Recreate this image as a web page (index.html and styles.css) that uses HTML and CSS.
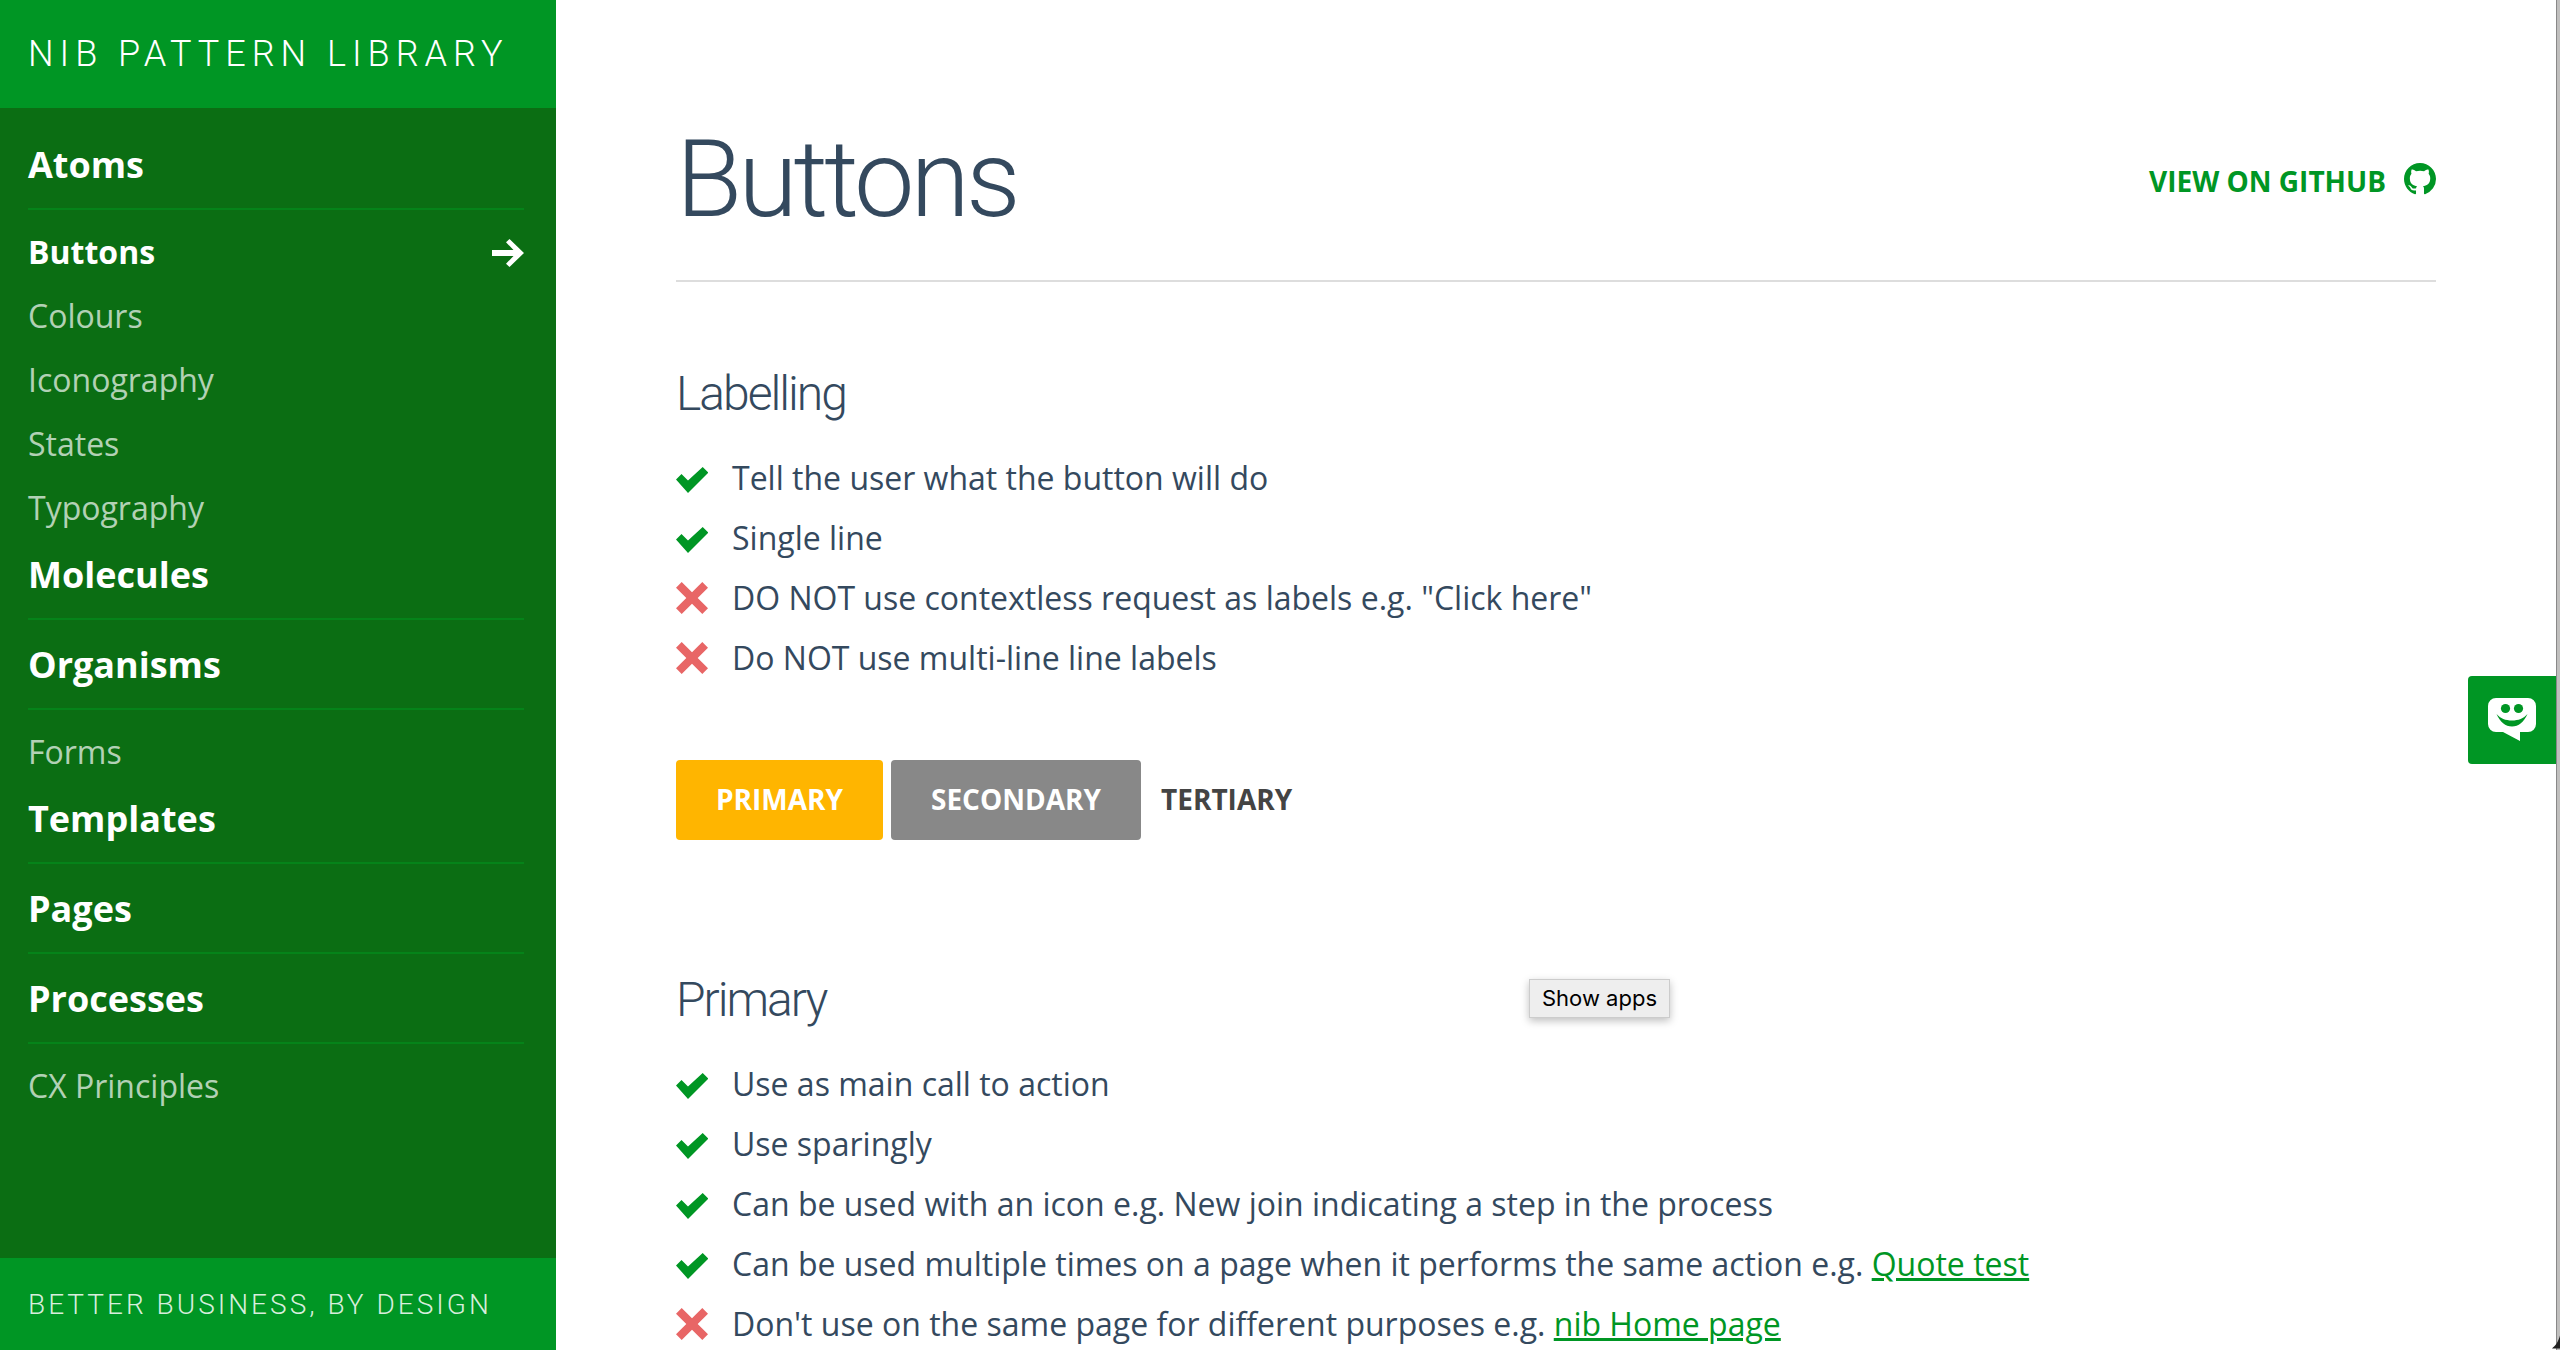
FILE: index.html
```html
<!DOCTYPE html>
<html lang="en">
<head>
<meta charset="utf-8">
<title>Buttons - nib Pattern Library</title>
<link rel="stylesheet" href="styles.css">
</head>
<body>
<svg class="sprite" aria-hidden="true">
  <symbol id="tick" viewBox="0 0 32 32"><path d="M0 17.500 5.500 12l6.500 6.500L26.700 5 32.300 10.600 12 31z"/></symbol>
  <symbol id="cross" viewBox="0 0 32 32"><path d="M5.700 0 16 10.300 26.300 0 32 5.700 21.700 16 32 26.300 26.300 32 16 21.700 5.700 32 0 26.300 10.300 16 0 5.700z"/></symbol>
</svg>
<div class="layout">
  <aside class="sidebar">
    <a class="brand" href="#">NIB PATTERN LIBRARY</a>
    <nav class="nav">
      <h2 class="nav-heading">Atoms</h2>
      <ul class="nav-list">
        <li><a class="nav-link nav-link-active" href="#">Buttons
          <svg class="arrow" viewBox="0 0 32 30" aria-hidden="true"><path d="M0 13h21.500L14 5.300 17.500 2 32 16 17.500 30 14 26.700 21.500 19H0z"/></svg></a></li>
        <li><a class="nav-link" href="#">Colours</a></li>
        <li><a class="nav-link" href="#">Iconography</a></li>
        <li><a class="nav-link" href="#">States</a></li>
        <li><a class="nav-link" href="#">Typography</a></li>
      </ul>
      <h2 class="nav-heading">Molecules</h2>
      <h2 class="nav-heading">Organisms</h2>
      <ul class="nav-list">
        <li><a class="nav-link" href="#">Forms</a></li>
      </ul>
      <h2 class="nav-heading">Templates</h2>
      <h2 class="nav-heading">Pages</h2>
      <h2 class="nav-heading">Processes</h2>
      <ul class="nav-list">
        <li><a class="nav-link" href="#">CX Principles</a></li>
      </ul>
    </nav>
    <footer class="tagline">BETTER BUSINESS, BY DESIGN</footer>
  </aside>

  <main class="main">
    <header class="page-header">
      <h1 class="page-title">Buttons</h1>
      <a class="github" href="#"><span class="github-label">VIEW ON GITHUB</span>
        <svg class="github-icon" viewBox="0 0 16 16" aria-hidden="true"><path d="M8 0C3.580 0 0 3.580 0 8c0 3.540 2.290 6.530 5.470 7.590.4.070.550-.170.550-.380 0-.190-.010-.820-.010-1.490-2.010.370-2.530-.490-2.690-.940-.090-.230-.480-.940-.820-1.130-.280-.150-.680-.520-.010-.530.630-.010 1.080.580 1.230.820.720 1.210 1.870.870 2.330.660.070-.520.280-.870.510-1.070-1.780-.2-3.640-.890-3.640-3.950 0-.870.310-1.590.820-2.150-.080-.2-.360-1.020.080-2.120 0 0 .670-.210 2.200.820.640-.180 1.320-.270 2-.270.680 0 1.360.090 2 .270 1.530-1.040 2.200-.820 2.200-.820.440 1.100.160 1.920.080 2.120.510.560.820 1.270.820 2.150 0 3.070-1.870 3.750-3.650 3.950.290.250.540.730.540 1.480 0 1.070-.010 1.930-.010 2.200 0 .210.150.460.550.380A8.013 8.013 0 0 0 16 8c0-4.420-3.580-8-8-8z"/></svg></a>
    </header>

    <section class="section">
      <h2 class="section-title">Labelling</h2>
      <ul class="rules">
        <li class="rule"><svg class="mark do" aria-hidden="true"><use href="#tick"/></svg><span>Tell the user what the button will do</span></li>
        <li class="rule"><svg class="mark do" aria-hidden="true"><use href="#tick"/></svg><span>Single line</span></li>
        <li class="rule"><svg class="mark dont" aria-hidden="true"><use href="#cross"/></svg><span>DO NOT use contextless request as labels e.g. "Click here"</span></li>
        <li class="rule"><svg class="mark dont" aria-hidden="true"><use href="#cross"/></svg><span>Do NOT use multi-line line labels</span></li>
      </ul>
      <div class="examples">
        <button class="button primary" type="button">PRIMARY</button>
        <button class="button secondary" type="button">SECONDARY</button>
        <button class="button tertiary" type="button">TERTIARY</button>
      </div>
    </section>

    <section class="section section-next">
      <h2 class="section-title">Primary</h2>
      <ul class="rules">
        <li class="rule"><svg class="mark do" aria-hidden="true"><use href="#tick"/></svg><span>Use as main call to action</span></li>
        <li class="rule"><svg class="mark do" aria-hidden="true"><use href="#tick"/></svg><span>Use sparingly</span></li>
        <li class="rule"><svg class="mark do" aria-hidden="true"><use href="#tick"/></svg><span>Can be used with an icon e.g. New join indicating a step in the process</span></li>
        <li class="rule"><svg class="mark do" aria-hidden="true"><use href="#tick"/></svg><span>Can be used multiple times on a page when it performs the same action e.g. <a class="link" href="#">Quote test</a></span></li>
        <li class="rule"><svg class="mark dont" aria-hidden="true"><use href="#cross"/></svg><span>Don't use on the same page for different purposes e.g. <a class="link" href="#">nib Home page</a></span></li>
      </ul>
    </section>
  </main>
  <div class="edge" aria-hidden="true"></div>
</div>

<button class="feedback" type="button" aria-label="Feedback">
  <svg class="feedback-icon" viewBox="0 0 48 44" aria-hidden="true">
    <path class="bubble" d="M8 0h32a8 8 0 0 1 8 8v18a8 8 0 0 1-8 8h-8v9L15 34H8a8 8 0 0 1-8-8V8a8 8 0 0 1 8-8z"/>
    <circle cx="17.500" cy="10.500" r="4.600"/><circle cx="30.500" cy="10.500" r="4.600"/>
    <path d="M8.500 16c4 4.500 9 6.500 15.500 6.500S35.500 20.500 39.500 16C36 24 30.500 28.500 24 28.500S12 24 8.500 16z"/>
  </svg>
</button>
<div class="tooltip" role="tooltip">Show apps</div>
<svg class="corner" viewBox="0 0 10 16" aria-hidden="true"><path d="M10 0v16H0c4-3 8-8 10-16z"/></svg>
</body>
</html>
```
FILE: styles.css
```css
:root {
  --green: #009624;
  --green-dark: #0b6e13;
  --ink: #34495e;
}

* { box-sizing: border-box; }

body {
  margin: 0;
  background: #fff;
  color: var(--ink);
  font: 32px/60px "Open Sans", "Liberation Sans", sans-serif;
}

h1, h2, ul { margin: 0; padding: 0; font-weight: inherit; }
ul { list-style: none; }
a { color: inherit; text-decoration: none; }
.sprite { display: none; }

.layout {
  display: grid;
  grid-template-columns: 556px 1fr 4px;
  height: 100vh;
}

/* Sidebar */
.sidebar {
  display: flex;
  flex-direction: column;
  min-height: 0;
  background: var(--green-dark);
  color: #fff;
}

.brand {
  padding: 0 28px;
  background: var(--green);
  font-family: Roboto, sans-serif;
  font-size: 36px;
  font-weight: 300;
  line-height: 108px;
  letter-spacing: 6px;
  white-space: nowrap;
}

.nav {
  flex: 1;
  min-height: 0;
  padding: 12px 32px 12px 28px;
  overflow: hidden;
}

.nav-heading {
  padding-top: 2px;
  border-bottom: 2px solid #058319;
  font-size: 36px;
  font-weight: 700;
  line-height: 86px;
}

.nav-list {
  display: grid;
  gap: 20px;
  padding-top: 20px;
  line-height: 44px;
}

.nav-link {
  display: flex;
  align-items: center;
  justify-content: space-between;
  color: rgba(255, 255, 255, .7);
}

.nav-link-active { color: #fff; font-weight: 700; }
.arrow { width: 32px; height: 30px; fill: currentColor; }

.tagline {
  padding: 2px 28px 0;
  background: var(--green);
  color: rgba(255, 255, 255, .85);
  font-family: Roboto, sans-serif;
  font-size: 28px;
  font-weight: 300;
  line-height: 90px;
  letter-spacing: 3px;
  white-space: nowrap;
}

/* Content */
.main {
  min-height: 0;
  padding: 120px 120px 0;
  overflow: hidden;
}

.page-header {
  display: flex;
  align-items: center;
  justify-content: space-between;
  padding-bottom: 42px;
  border-bottom: 2px solid #ddd;
}

.page-title {
  font: 300 108px/118px Roboto, sans-serif;
  letter-spacing: -4px;
}

.github {
  display: flex;
  align-items: center;
  gap: 18px;
  color: var(--green);
  font-size: 28px;
  font-weight: 700;
}

.github-label { padding-top: 4px; }
.github-icon { width: 32px; height: 32px; fill: currentColor; }

.section { padding-top: 82px; }
.section-next { padding-top: 130px; }

.section-title {
  margin-bottom: 24px;
  font: 300 48px/60px Roboto, sans-serif;
  letter-spacing: -2px;
}

.rule {
  display: flex;
  align-items: center;
  gap: 24px;
}

.mark { flex: none; width: 32px; height: 32px; }
.do { fill: var(--green); }
.dont { fill: #e86666; }
.link { color: var(--green); text-decoration: underline; }

.examples {
  display: flex;
  gap: 8px;
  margin-top: 72px;
}

.button {
  padding: 0 40px 2px;
  border: 0;
  border-radius: 4px;
  color: #fff;
  font: 700 28px/78px "Open Sans", sans-serif;
}

.primary { background: #ffb500; }
.secondary { background: #888; }
.tertiary { padding: 0 12px 2px; background: none; color: #444; }

/* Window edge and overlays */
.edge { border-left: 1px solid #888; background: #c0bfbe; }

.feedback {
  position: fixed;
  top: 50%;
  right: 4px;
  display: grid;
  place-items: center;
  width: 88px;
  height: 88px;
  margin-top: 1px;
  padding: 0;
  border: 0;
  border-radius: 4px 0 0 4px;
  background: var(--green);
}

.feedback-icon { width: 48px; height: 44px; fill: var(--green); }
.bubble { fill: #fff; }

.tooltip {
  position: absolute;
  top: 979px;
  left: 1529px;
  padding: 0 12px;
  border: 1px solid #ccc;
  background: #eee;
  box-shadow: 0 3px 8px rgba(0, 0, 0, .25);
  color: #000;
  font: 22px/37px Inter, sans-serif;
}

.corner {
  position: fixed;
  right: 0;
  bottom: 0;
  width: 8px;
  height: 16px;
  fill: #222;
}
```
